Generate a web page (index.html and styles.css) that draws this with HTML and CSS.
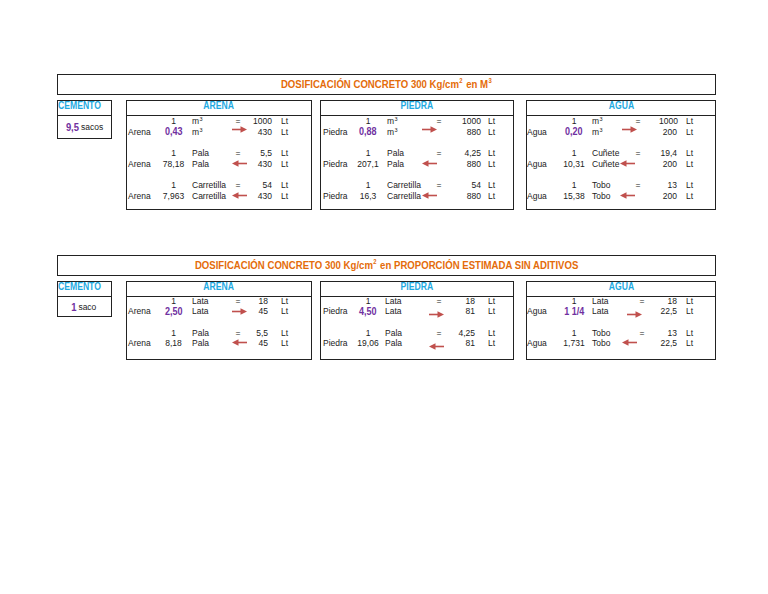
FILE: index.html
```html
<!DOCTYPE html>
<html lang="es">
<head>
<meta charset="utf-8">
<title>Dosificación concreto</title>
<link rel="stylesheet" href="styles.css">
</head>
<body>
<div class="page">

  <section class="sec s1">
    <div class="title"><span class="nw">DOSIFICACIÓN CONCRETO 300 Kg/cm<sup>2</sup> en M<sup>3</sup></span></div>
    <div class="grp">
      <div class="cem">
        <div class="cem-h"><span class="nw">CEMENTO</span></div>
        <div class="cem-b"><span class="big">9,5</span>&nbsp;sacos</div>
      </div>

      <div class="box arena">
        <div class="bh"><span class="nw">ARENA</span></div>
        <div class="bb">
          <div class="pair">
            <div class="r ra"><span></span><span class="n">1</span><span class="u">m<sup>3</sup></span><span class="e">=</span><span class="v">1000</span><span class="l">Lt</span></div>
            <div class="r rb"><span class="lb">Arena</span><span class="n"><span class="big">0,43</span></span><span class="u">m<sup>3</sup></span><span class="a up3"><svg width="15" height="7" viewBox="0 0 15 7"><path d="M0 3.5H10" stroke="#c0504d" stroke-width="1.6"/><path d="M8.5 0.3L15 3.5L8.5 6.7Z" fill="#c0504d"/></svg></span><span class="v">430</span><span class="l">Lt</span></div>
          </div>
          <div class="pair">
            <div class="r ra"><span></span><span class="n">1</span><span class="u">Pala</span><span class="e">=</span><span class="v">5,5</span><span class="l">Lt</span></div>
            <div class="r rb"><span class="lb">Arena</span><span class="n">78,18</span><span class="u">Pala</span><span class="a up1"><svg width="15" height="7" viewBox="0 0 15 7"><path d="M5 3.5H15" stroke="#c0504d" stroke-width="1.6"/><path d="M6.5 0.3L0 3.5L6.5 6.7Z" fill="#c0504d"/></svg></span><span class="v">430</span><span class="l">Lt</span></div>
          </div>
          <div class="pair">
            <div class="r ra"><span></span><span class="n">1</span><span class="u">Carretilla</span><span class="e">=</span><span class="v">54</span><span class="l">Lt</span></div>
            <div class="r rb"><span class="lb">Arena</span><span class="n">7,963</span><span class="u">Carretilla</span><span class="a up1"><svg width="15" height="7" viewBox="0 0 15 7"><path d="M5 3.5H15" stroke="#c0504d" stroke-width="1.6"/><path d="M6.5 0.3L0 3.5L6.5 6.7Z" fill="#c0504d"/></svg></span><span class="v">430</span><span class="l">Lt</span></div>
          </div>
        </div>
      </div>

      <div class="box piedra">
        <div class="bh"><span class="nw">PIEDRA</span></div>
        <div class="bb">
          <div class="pair">
            <div class="r ra"><span></span><span class="n">1</span><span class="u">m<sup>3</sup></span><span class="e">=</span><span class="v">1000</span><span class="l">Lt</span></div>
            <div class="r rb"><span class="lb">Piedra</span><span class="n"><span class="big">0,88</span></span><span class="u">m<sup>3</sup></span><span class="a up3"><svg width="15" height="7" viewBox="0 0 15 7"><path d="M0 3.5H10" stroke="#c0504d" stroke-width="1.6"/><path d="M8.5 0.3L15 3.5L8.5 6.7Z" fill="#c0504d"/></svg></span><span class="v">880</span><span class="l">Lt</span></div>
          </div>
          <div class="pair">
            <div class="r ra"><span></span><span class="n">1</span><span class="u">Pala</span><span class="e">=</span><span class="v">4,25</span><span class="l">Lt</span></div>
            <div class="r rb"><span class="lb">Piedra</span><span class="n">207,1</span><span class="u">Pala</span><span class="a up1"><svg width="15" height="7" viewBox="0 0 15 7"><path d="M5 3.5H15" stroke="#c0504d" stroke-width="1.6"/><path d="M6.5 0.3L0 3.5L6.5 6.7Z" fill="#c0504d"/></svg></span><span class="v">880</span><span class="l">Lt</span></div>
          </div>
          <div class="pair">
            <div class="r ra"><span></span><span class="n">1</span><span class="u">Carretilla</span><span class="e">=</span><span class="v">54</span><span class="l">Lt</span></div>
            <div class="r rb"><span class="lb">Piedra</span><span class="n">16,3</span><span class="u">Carretilla</span><span class="a up1"><svg width="15" height="7" viewBox="0 0 15 7"><path d="M5 3.5H15" stroke="#c0504d" stroke-width="1.6"/><path d="M6.5 0.3L0 3.5L6.5 6.7Z" fill="#c0504d"/></svg></span><span class="v">880</span><span class="l">Lt</span></div>
          </div>
        </div>
      </div>

      <div class="box agua">
        <div class="bh"><span class="nw">AGUA</span></div>
        <div class="bb">
          <div class="pair">
            <div class="r ra"><span></span><span class="n">1</span><span class="u">m<sup>3</sup></span><span class="e">=</span><span class="v">1000</span><span class="l">Lt</span></div>
            <div class="r rb"><span class="lb">Agua</span><span class="n"><span class="big">0,20</span></span><span class="u">m<sup>3</sup></span><span class="a rt up3"><svg width="15" height="7" viewBox="0 0 15 7"><path d="M0 3.5H10" stroke="#c0504d" stroke-width="1.6"/><path d="M8.5 0.3L15 3.5L8.5 6.7Z" fill="#c0504d"/></svg></span><span class="v">200</span><span class="l">Lt</span></div>
          </div>
          <div class="pair">
            <div class="r ra"><span></span><span class="n">1</span><span class="u">Cuñete</span><span class="e">=</span><span class="v">19,4</span><span class="l">Lt</span></div>
            <div class="r rb"><span class="lb">Agua</span><span class="n">10,31</span><span class="u">Cuñete</span><span class="a up1"><svg width="15" height="7" viewBox="0 0 15 7"><path d="M5 3.5H15" stroke="#c0504d" stroke-width="1.6"/><path d="M6.5 0.3L0 3.5L6.5 6.7Z" fill="#c0504d"/></svg></span><span class="v">200</span><span class="l">Lt</span></div>
          </div>
          <div class="pair">
            <div class="r ra"><span></span><span class="n">1</span><span class="u">Tobo</span><span class="e">=</span><span class="v">13</span><span class="l">Lt</span></div>
            <div class="r rb"><span class="lb">Agua</span><span class="n">15,38</span><span class="u">Tobo</span><span class="a up1"><svg width="15" height="7" viewBox="0 0 15 7"><path d="M5 3.5H15" stroke="#c0504d" stroke-width="1.6"/><path d="M6.5 0.3L0 3.5L6.5 6.7Z" fill="#c0504d"/></svg></span><span class="v">200</span><span class="l">Lt</span></div>
          </div>
        </div>
      </div>
    </div>
  </section>

  <section class="sec s2">
    <div class="title"><span class="nw">DOSIFICACIÓN CONCRETO 300 Kg/cm<sup>2</sup> en PROPORCIÓN ESTIMADA SIN ADITIVOS</span></div>
    <div class="grp">
      <div class="cem">
        <div class="cem-h"><span class="nw">CEMENTO</span></div>
        <div class="cem-b"><span class="big">1</span>&nbsp;saco</div>
      </div>

      <div class="box arena">
        <div class="bh"><span class="nw">ARENA</span></div>
        <div class="bb">
          <div class="pair">
            <div class="r ra"><span></span><span class="n">1</span><span class="u">Lata</span><span class="e">=</span><span class="v">18</span><span class="l">Lt</span></div>
            <div class="r rb"><span class="lb">Arena</span><span class="n"><span class="big">2,50</span></span><span class="u">Lata</span><span class="a"><svg width="15" height="7" viewBox="0 0 15 7"><path d="M0 3.5H10" stroke="#c0504d" stroke-width="1.6"/><path d="M8.5 0.3L15 3.5L8.5 6.7Z" fill="#c0504d"/></svg></span><span class="v">45</span><span class="l">Lt</span></div>
          </div>
          <div class="pair">
            <div class="r ra"><span></span><span class="n">1</span><span class="u">Pala</span><span class="e">=</span><span class="v">5,5</span><span class="l">Lt</span></div>
            <div class="r rb"><span class="lb">Arena</span><span class="n">8,18</span><span class="u">Pala</span><span class="a up1"><svg width="15" height="7" viewBox="0 0 15 7"><path d="M5 3.5H15" stroke="#c0504d" stroke-width="1.6"/><path d="M6.5 0.3L0 3.5L6.5 6.7Z" fill="#c0504d"/></svg></span><span class="v">45</span><span class="l">Lt</span></div>
          </div>
        </div>
      </div>

      <div class="box piedra">
        <div class="bh"><span class="nw">PIEDRA</span></div>
        <div class="bb">
          <div class="pair">
            <div class="r ra"><span></span><span class="n">1</span><span class="u">Lata</span><span class="e">=</span><span class="v">18</span><span class="l">Lt</span></div>
            <div class="r rb"><span class="lb">Piedra</span><span class="n"><span class="big">4,50</span></span><span class="u">Lata</span><span class="a dn3"><svg width="15" height="7" viewBox="0 0 15 7"><path d="M0 3.5H10" stroke="#c0504d" stroke-width="1.6"/><path d="M8.5 0.3L15 3.5L8.5 6.7Z" fill="#c0504d"/></svg></span><span class="v">81</span><span class="l">Lt</span></div>
          </div>
          <div class="pair">
            <div class="r ra"><span></span><span class="n">1</span><span class="u">Pala</span><span class="e">=</span><span class="v">4,25</span><span class="l">Lt</span></div>
            <div class="r rb"><span class="lb">Piedra</span><span class="n">19,06</span><span class="u">Pala</span><span class="a dn3"><svg width="15" height="7" viewBox="0 0 15 7"><path d="M5 3.5H15" stroke="#c0504d" stroke-width="1.6"/><path d="M6.5 0.3L0 3.5L6.5 6.7Z" fill="#c0504d"/></svg></span><span class="v">81</span><span class="l">Lt</span></div>
          </div>
        </div>
      </div>

      <div class="box agua">
        <div class="bh"><span class="nw">AGUA</span></div>
        <div class="bb">
          <div class="pair">
            <div class="r ra"><span></span><span class="n">1</span><span class="u">Lata</span><span class="e">=</span><span class="v">18</span><span class="l">Lt</span></div>
            <div class="r rb"><span class="lb">Agua</span><span class="n"><span class="big">1 1/4</span></span><span class="u">Lata</span><span class="a rt dn3"><svg width="15" height="7" viewBox="0 0 15 7"><path d="M0 3.5H10" stroke="#c0504d" stroke-width="1.6"/><path d="M8.5 0.3L15 3.5L8.5 6.7Z" fill="#c0504d"/></svg></span><span class="v">22,5</span><span class="l">Lt</span></div>
          </div>
          <div class="pair">
            <div class="r ra"><span></span><span class="n">1</span><span class="u">Tobo</span><span class="e">=</span><span class="v">13</span><span class="l">Lt</span></div>
            <div class="r rb"><span class="lb">Agua</span><span class="n">1,731</span><span class="u">Tobo</span><span class="a up1"><svg width="15" height="7" viewBox="0 0 15 7"><path d="M5 3.5H15" stroke="#c0504d" stroke-width="1.6"/><path d="M6.5 0.3L0 3.5L6.5 6.7Z" fill="#c0504d"/></svg></span><span class="v">22,5</span><span class="l">Lt</span></div>
          </div>
        </div>
      </div>
    </div>
  </section>

</div>
</body>
</html>
```

FILE: styles.css
```css
* { box-sizing: border-box; margin: 0; padding: 0; }

body {
  margin: 0;
  background: #fff;
  color: #222;
  font-family: "Liberation Sans", Arial, sans-serif;
  font-size: 8.5px;
}

.page {
  width: 768px;
  height: 594px;
  padding: 74px 0 0 57px;
}

.sec { width: 659px; }
.s2 { margin-top: 45px; }

/* condensed bold text (Arial Narrow look) */
.nw, .big {
  display: inline-block;
  transform: scaleX(0.82);
  white-space: nowrap;
}

.title {
  height: 21px;
  border: 1px solid #222;
  display: flex;
  align-items: center;
  justify-content: center;
  font-weight: bold;
  font-size: 11.5px;
  line-height: 1;
  color: #e46c0a;
  white-space: nowrap;
}
.title .nw { transform: scaleX(0.835); }
.title sup {
  font-size: 7px;
  line-height: 0;
  vertical-align: 5px;
  margin: 0 1px 0 0.5px;
}

.grp {
  display: flex;
  align-items: flex-start;
  margin-top: 5px;
}

.cem {
  width: 55px;
  border: 1px solid #222;
  margin-right: 14px;
}
.cem-h, .bh {
  height: 15px;
  border-bottom: 1px solid #222;
  font-weight: bold;
  font-size: 10.5px;
  line-height: 9px;
  color: #1ea9e1;
  white-space: nowrap;
}
.cem-h { text-align: left; }
.cem-h .nw { transform-origin: left center; }
.bh { text-align: center; }

.cem-b {
  height: 22px;
  display: flex;
  align-items: center;
  justify-content: center;
  white-space: nowrap;
}
.s2 .cem-b { height: 19px; }
.cem-b .big { transform-origin: right center; margin-left: -3px; font-size: 11.5px; }

.big {
  font-weight: bold;
  font-size: 11px;
  color: #7030a0;
}

.box { border: 1px solid #222; }
.arena { width: 186px; margin-right: 8px; }
.piedra { width: 194px; margin-right: 12px; }
.agua { width: 190px; }

.bb {
  display: flex;
  flex-direction: column;
  gap: 10px;
  padding-bottom: 7px;
}
.s2 .bb { gap: 12px; padding-bottom: 10px; }

.r {
  display: grid;
  align-items: center;
  line-height: 8.5px;
  white-space: nowrap;
}
.ra { height: 10px; }
.rb { height: 12px; }
.s2 .ra { height: 9px; }
.s2 .rb { height: 11px; }

.r sup {
  font-size: 5.5px;
  line-height: 0;
  vertical-align: 3px;
  margin-left: 0.5px;
}

.n { text-align: center; }
.e { text-align: center; }
.v { text-align: right; }
.a { display: flex; align-items: center; }
.a svg { display: block; position: relative; }
.up3 svg { top: -3px; }
.up1 svg { top: -1px; }
.dn3 svg { top: 3px; }

.arena .r { grid-template-columns: 31px 31px 37px 24px 24px 37px; }
.arena .lb { padding-left: 1px; }
.arena .u { padding-left: 3px; }
.arena .v { padding-right: 2px; }
.arena .l { padding-left: 7px; }
.arena .a { justify-content: center; padding-left: 2px; }
.s2 .arena .v { padding-right: 6px; }

.piedra .r { grid-template-columns: 34px 26px 39px 38px 25px 30px; }
.piedra .lb { padding-left: 2px; }
.piedra .u { padding-left: 6px; }
.piedra .v { padding-right: 2px; }
.piedra .l { padding-left: 5px; }
.piedra .a { padding-left: 2px; }
.s2 .piedra .v { padding-right: 8px; }
.s2 .piedra .a { padding-left: 9px; }
.s2 .piedra .u { padding-left: 4px; }

.agua .r { grid-template-columns: 32px 30px 28px 42px 20px 36px; }
.agua .lb { padding-left: 0; }
.agua .u { padding-left: 3px; }
.agua .v { padding-right: 2px; }
.agua .l { padding-left: 7px; }
.agua .a { padding-left: 3px; }
.agua .a.rt { padding-left: 5px; }
.s2 .agua .a { padding-left: 5px; }
.s2 .agua .a.rt { padding-left: 10px; }
.s2 .agua .e { padding-left: 8px; }
```
